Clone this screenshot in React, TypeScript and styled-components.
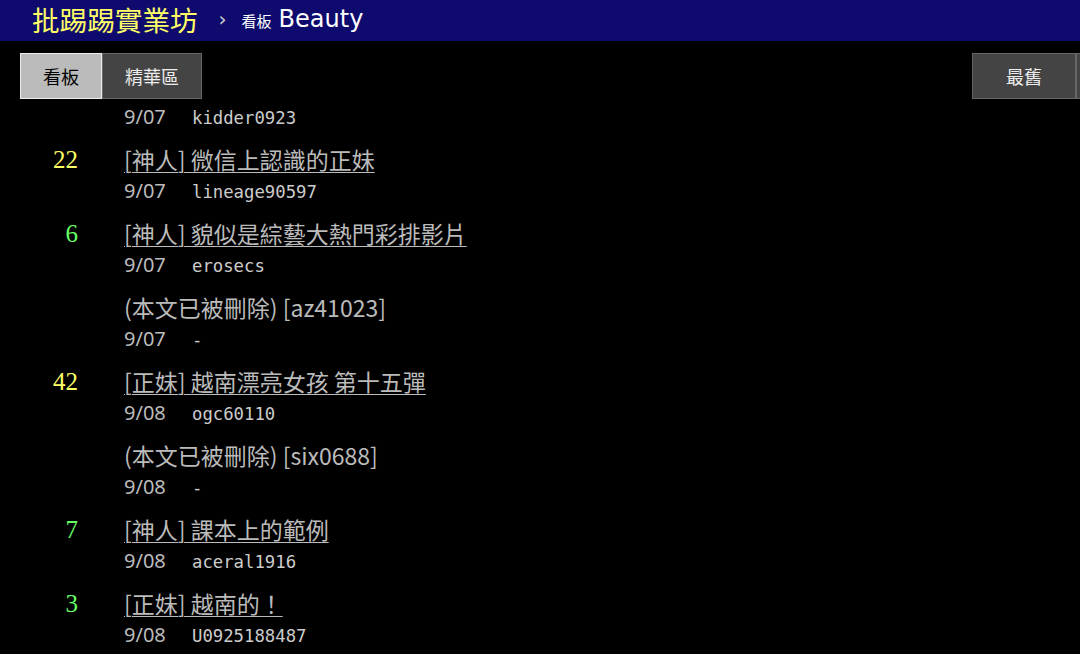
import React from "react";
import styled, { createGlobalStyle } from "styled-components";

const GlobalStyle = createGlobalStyle`
  html, body {
    margin: 0;
    padding: 0;
    background: #000;
    color: #ccc;
    font-family: "Noto Sans CJK TC", "Noto Sans", sans-serif;
  }
`;

type Post = {
  push?: string;
  title: string;
  date: string;
  author: string;
  deleted?: boolean;
};

const POSTS: Post[] = [
  { title: "[正妹] 今天的正妹", date: "9/07", author: "kidder0923" },
  { push: "22", title: "[神人] 微信上認識的正妹", date: "9/07", author: "lineage90597" },
  { push: "6", title: "[神人] 貌似是綜藝大熱門彩排影片", date: "9/07", author: "erosecs" },
  { title: "(本文已被刪除) [az41023]", date: "9/07", author: "-", deleted: true },
  { push: "42", title: "[正妹] 越南漂亮女孩 第十五彈", date: "9/08", author: "ogc60110" },
  { title: "(本文已被刪除) [six0688]", date: "9/08", author: "-", deleted: true },
  { push: "7", title: "[神人] 課本上的範例", date: "9/08", author: "aceral1916" },
  { push: "3", title: "[正妹] 越南的！", date: "9/08", author: "U0925188487" },
];

const pushColor = (n?: string) => {
  if (!n) return "#fff";
  const v = parseInt(n, 10);
  return v >= 10 ? "#ffff66" : "#66ff66";
};

const App = () => {
  return (
    <>
      <GlobalStyle />
      <TopBar>
        <Brand>批踢踢實業坊</Brand>
        <Chevron>›</Chevron>
        <BoardLabel>看板</BoardLabel>
        <BoardName>Beauty</BoardName>
      </TopBar>
      <ActionBar>
        <BtnGroup>
          <Btn $selected>看板</Btn>
          <Btn>精華區</Btn>
        </BtnGroup>
        <PagingGroup>
          <Btn>最舊</Btn>
          <Btn>‹ 上頁</Btn>
          <Btn>下頁 ›</Btn>
          <Btn>最新</Btn>
        </PagingGroup>
      </ActionBar>
      <List>
        {POSTS.map((p, i) => (
          <Row key={i}>
            <Push style={{ color: pushColor(p.push) }}>{p.push}</Push>
            <Body>
              {p.deleted ? (
                <Deleted>{p.title}</Deleted>
              ) : (
                <Title href="#">{p.title}</Title>
              )}
              <Meta>
                <DateText>{p.date}</DateText>
                <Author>{p.author}</Author>
              </Meta>
            </Body>
          </Row>
        ))}
      </List>
    </>
  );
};

export default App;

const TopBar = styled.div`
  height: 41px;
  background: #0e0a6e;
  display: flex;
  align-items: center;
  padding-left: 32px;
  box-sizing: border-box;
  position: fixed;
  top: 0;
  left: 0;
  right: 0;
  z-index: 3;
`;

const Brand = styled.div`
  color: #ffff66;
  font-size: 27.6px;
  line-height: 36px;
  margin-top: -4px;
`;

const Chevron = styled.span`
  color: #ccc;
  font-size: 20px;
  margin: -3px 15px 0 21px;
  font-family: "DejaVu Sans", sans-serif;
`;

const BoardLabel = styled.span`
  color: #fff;
  font-size: 15px;
  margin-right: 7px;
`;

const BoardName = styled.span`
  color: #fff;
  font-size: 24px;
  font-family: "DejaVu Sans", "Noto Sans", sans-serif;
  margin-top: -3px;
`;

const ActionBar = styled.div`
  position: fixed;
  top: 41px;
  left: 0;
  right: 0;
  height: 61px;
  background: #000;
  z-index: 2;
  display: flex;
  justify-content: space-between;
  align-items: flex-start;
  padding: 12px 0 0 20px;
  box-sizing: border-box;
  overflow: hidden;
`;

const BtnGroup = styled.div`
  display: flex;
`;

const PagingGroup = styled.div`
  display: flex;
  width: 108px;
  flex-shrink: 0;
  overflow: visible;
`;

const Btn = styled.div<{ $selected?: boolean }>`
  flex-shrink: 0;
  height: 46px;
  box-sizing: border-box;
  padding: 0 22px;
  min-width: 82px;
  display: flex;
  align-items: center;
  justify-content: center;
  font-size: 18px;
  white-space: nowrap;
  background: ${(p) => (p.$selected ? "#bbb" : "#444")};
  color: ${(p) => (p.$selected ? "#000" : "#eee")};
  border: 1px solid ${(p) => (p.$selected ? "#eee" : "#666")};
  ${PagingGroup} & {
    width: 104px;
  }
`;

const List = styled.div`
  padding-top: 59px;
`;

const Row = styled.div`
  display: flex;
  padding-top: 10px;
`;

const Push = styled.div`
  width: 78px;
  text-align: right;
  font-family: "Liberation Serif", "DejaVu Serif", serif;
  font-size: 25px;
  line-height: 34px;
  flex-shrink: 0;
`;

const Body = styled.div`
  margin-left: 46px;
  display: flex;
  flex-direction: column;
`;

const Title = styled.a`
  color: #bbb;
  font-size: 23px;
  line-height: 32px;
  height: 32px;
  text-decoration: underline;
  text-underline-offset: 3px;
  text-decoration-thickness: 1px;
  white-space: nowrap;
`;

const Deleted = styled.div`
  color: #bbb;
  font-size: 23px;
  line-height: 32px;
  height: 32px;
  white-space: nowrap;
`;

const Meta = styled.div`
  display: flex;
  align-items: baseline;
  height: 32px;
  line-height: 32px;
`;

const DateText = styled.span`
  width: 68px;
  color: #bbb;
  font-size: 20px;
  font-family: "Noto Sans", sans-serif;
`;

const Author = styled.span`
  color: #ccc;
  font-size: 17.3px;
  font-family: "DejaVu Sans Mono", monospace;
`;
